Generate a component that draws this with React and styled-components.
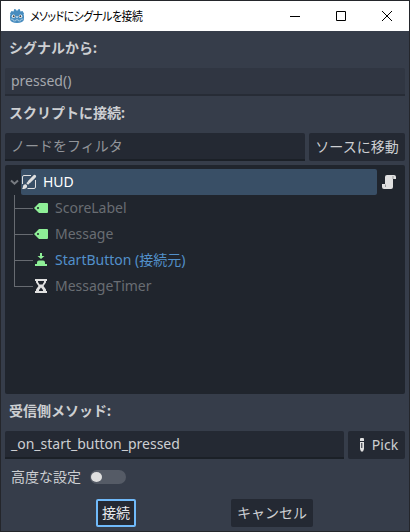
import React from "react";
import styled, { createGlobalStyle } from "styled-components";

const GlobalStyle = createGlobalStyle`
  * { box-sizing: border-box; }
  body { margin: 0; background: #222429; overflow: hidden; }
  svg { display: block; flex: none; }
`;

const Window = styled.div`
  width: 410px;
  height: 532px;
  border: 1px solid #24262b;
  background: #363d4a;
  color: #cdcfd2;
  font: 14px/20px "Noto Sans", "Noto Sans CJK JP", sans-serif;
  white-space: nowrap;
`;

const TitleBar = styled.header`
  display: flex;
  align-items: center;
  height: 30px;
  padding-left: 8px;
  background: #fff;
  color: #000;
`;

const Title = styled.h1`
  flex: 1;
  margin: 0 0 0 5px;
  font: 400 12px/18px "Noto Sans CJK JP", sans-serif;
  font-feature-settings: "palt";
  letter-spacing: -0.55px;
  transform: scaleX(0.905);
  transform-origin: left;
`;

const WindowButton = styled.button`
  display: grid;
  place-items: center;
  width: 46px;
  height: 30px;
  padding: 0;
  border: 0;
  background: none;
`;

const WindowControls = styled.div`
  display: flex;
  margin-right: -1px;
`;

const Body = styled.main`
  display: flex;
  flex-direction: column;
  padding: 0 4px;
`;

const Heading = styled.h2`
  height: 37px;
  margin: 0;
  padding: 7px 0 0 4px;
  font-size: 14px;
  line-height: 20px;
  font-weight: 700;
`;

const FieldRow = styled.div`
  display: flex;
  gap: 4px;
`;

const Field = styled.div`
  flex: 1;
  height: 28px;
  padding: 3px 6px;
  border-radius: 2px 2px 0 0;
  border-bottom: 2px solid ${(p) => (p.$readOnly ? "#272c36" : "#1b2027")};
  background: ${(p) => (p.$readOnly ? "#303642" : "#242933")};
  color: ${(p) => (p.$muted ? "#92959a" : p.$readOnly ? "#a5a8ad" : "#cdcfd2")};
`;

const Button = styled.button`
  display: flex;
  align-items: center;
  justify-content: center;
  gap: ${(p) => p.$gap || 0}px;
  width: ${(p) => p.$width}px;
  height: 28px;
  padding: 0 0 0 ${(p) => p.$inset || 0}px;
  border: ${(p) => (p.$focused ? "2px solid #70bafa" : "0")};
  border-radius: 2px;
  background: #242933;
  color: ${(p) => (p.$focused ? "#e8eaed" : "#cdcfd2")};
  font: inherit;
`;

const Tree = styled.section`
  height: 229px;
  margin-top: 4px;
  padding: 4px;
  border-radius: 2px;
  background: #20252d;
`;

const RootRow = styled.div`
  display: flex;
  align-items: center;
  height: 26px;
`;

const Selection = styled.div`
  display: flex;
  align-items: center;
  gap: 6px;
  width: 356px;
  height: 26px;
  margin: 0 4px 0 2px;
  border-radius: 2px;
  background: #394f66;
  color: #fff;
`;

const Children = styled.div`
  display: flex;
  padding-left: 5px;
`;

const Items = styled.div`
  display: flex;
  flex-direction: column;
`;

const Item = styled.div`
  display: flex;
  align-items: center;
  gap: 6px;
  height: 26px;
  color: ${(p) => (p.$source ? "#5290ca" : "#696d73")};
`;

const Option = styled.label`
  display: flex;
  align-items: center;
  gap: 9px;
  height: 36px;
  padding-left: 6px;
`;

const Toggle = styled.span`
  width: 36px;
  height: 14px;
  padding: 2px 1px;
  border-radius: 7px;
  background: #555b66;
`;

const Knob = styled.span`
  display: block;
  width: 11px;
  height: 10px;
  border-radius: 50%;
  background: #e0e0e0;
`;

const Actions = styled.footer`
  display: flex;
  gap: 95px;
  margin-top: 4px;
  padding-left: 91px;
`;

const GodotIcon = () => (
  <svg width="16" height="16" viewBox="0 0 16 16">
    <path d="M1 5.500 2.500 3l2 .6.800-2.600L7 1.500l.3 1h1.400l.3-1L10.700 1l.8 2.600 2-.6L15 5.500 14.500 7l.5.500v4c-.5 2-3 3.500-7 3.500s-6.500-1.500-7-3.500v-4L1.500 7z" fill="#478cbf" />
    <path d="M1.500 11l2.500.3.4 1.500 2 .2.500-1.200h2.200l.500 1.200 2-.2.400-1.500 2.500-.3" fill="none" stroke="#c4dbea" strokeWidth=".7" />
    <circle cx="4.500" cy="8.300" r="1.700" fill="#fff" />
    <circle cx="11.500" cy="8.300" r="1.700" fill="#fff" />
    <circle cx="4.700" cy="8.300" r="1" fill="#414042" />
    <circle cx="11.300" cy="8.300" r="1" fill="#414042" />
    <path d="M8 8v2" stroke="#fff" />
  </svg>
);

const MinimizeIcon = () => (
  <svg width="10" height="10"><path d="M0 5.500h10" stroke="#000" /></svg>
);
const MaximizeIcon = () => (
  <svg width="10" height="10"><path d="M.5.5h9v9h-9z" fill="none" stroke="#000" /></svg>
);
const CloseIcon = () => (
  <svg width="10" height="10"><path d="M0 0l10 10M10 0L0 10" stroke="#000" /></svg>
);

const ArrowIcon = () => (
  <svg width="10" height="8"><path d="M2 2.500l3.500 3.200L9 2.500" fill="none" stroke="#777b81" strokeWidth="2" /></svg>
);

const CanvasLayerIcon = () => (
  <svg width="16" height="16" fill="none" stroke="#e0e0e0">
    <path d="M10 1.500H3A1.500 1.500 0 0 0 1.500 3v7M14.500 6v7a1.500 1.500 0 0 1-1.500 1.500H6.500" />
    <path d="M13.600 2.400 8.300 7.700" strokeWidth="3" strokeLinecap="round" />
    <path d="M6 8.500 7.700 10.200" strokeWidth="1.800" />
    <path d="M4.600 10.200a2.200 2.200 0 0 1 1.500 2.300c-.2 2-2.300 2.500-5.100 2.500.9-.8.8-1.700 1.100-2.900.3-1.300 1.200-2 2.500-1.900z" fill="#e0e0e0" stroke="none" />
  </svg>
);

const ScriptIcon = () => (
  <svg width="16" height="16" fill="#e0e0e0">
    <path d="M6 1a2 2 0 0 0-2 2v7H1v3a2 2 0 0 0 2 2h7a2 2 0 0 0 2-2V5h3V3a2 2 0 0 0-2-2z" />
    <path d="M12 2v3M4.500 10.500V13" fill="none" stroke="#777b80" strokeWidth=".7" />
  </svg>
);

const LabelIcon = () => (
  <svg width="16" height="16">
    <path fill="#8eef97" fillRule="evenodd" d="M6 3h8a1 1 0 0 1 1 1v8a1 1 0 0 1-1 1H6L1 8zM5 7a1 1 0 1 0 0 2 1 1 0 0 0 0-2z" />
  </svg>
);

const ButtonNodeIcon = () => (
  <svg width="16" height="16" fill="#8eef97">
    <path d="M7 1h2v3h2.500L8 7 4.500 4H7zM6 8.500h4a2 2 0 0 1 2 2V11H4v-.5a2 2 0 0 1 2-2zM2 12h12v2H2zM4 11h8v1H4z" />
  </svg>
);

const TimerIcon = () => (
  <svg width="16" height="16">
    <path fill="#e0e0e0" fillRule="evenodd" d="M2 1h12v2h-1v1.500L10.500 8 13 11.500V13h1v2H2v-2h1v-1.500L5.500 8 3 4.500V3H2zM5 3v1l1.500 2.500h3L11 4V3zM8 9.500 6 12v1h4v-1z" />
  </svg>
);

const PickIcon = () => (
  <svg width="6" height="16" fill="#e0e0e0">
    <path d="M1 2a1 1 0 0 1 1-1h2a1 1 0 0 1 1 1v2H1z" />
    <path fillRule="evenodd" d="M1 5h4v7l-1 2.500H2L1 12zM2.300 6v5h1V6z" />
  </svg>
);

const Branches = () => (
  <svg width="19" height="104" fill="none" stroke="#676b71">
    <path d="M.5 0v91.500M0 13.500h19M0 39.500h19M0 65.500h19M0 91.500h19" />
  </svg>
);

const nodes = [
  { name: "ScoreLabel", icon: LabelIcon },
  { name: "Message", icon: LabelIcon },
  { name: "StartButton (接続元)", icon: ButtonNodeIcon, source: true },
  { name: "MessageTimer", icon: TimerIcon },
];

export default function App() {
  return (
    <>
      <GlobalStyle />
      <Window>
        <TitleBar>
          <GodotIcon />
          <Title>メソッドにシグナルを接続</Title>
          <WindowControls>
            <WindowButton aria-label="最小化"><MinimizeIcon /></WindowButton>
            <WindowButton aria-label="最大化"><MaximizeIcon /></WindowButton>
            <WindowButton aria-label="閉じる"><CloseIcon /></WindowButton>
          </WindowControls>
        </TitleBar>
        <Body>
          <Heading>シグナルから:</Heading>
          <Field $readOnly>pressed()</Field>
          <Heading>スクリプトに接続:</Heading>
          <FieldRow>
            <Field $muted>ノードをフィルタ</Field>
            <Button $width={96}>ソースに移動</Button>
          </FieldRow>
          <Tree>
            <RootRow>
              <ArrowIcon />
              <Selection><CanvasLayerIcon />HUD</Selection>
              <ScriptIcon />
            </RootRow>
            <Children>
              <Branches />
              <Items>
                {nodes.map(({ name, icon: Icon, source }) => (
                  <Item key={name} $source={source}><Icon />{name}</Item>
                ))}
              </Items>
            </Children>
          </Tree>
          <Heading>受信側メソッド:</Heading>
          <FieldRow>
            <Field>_on_start_button_pressed</Field>
            <Button $width={57} $gap={7} $inset={4}><PickIcon />Pick</Button>
          </FieldRow>
          <Option>高度な設定<Toggle><Knob /></Toggle></Option>
          <Actions>
            <Button $width={40} $focused>接続</Button>
            <Button $width={82}>キャンセル</Button>
          </Actions>
        </Body>
      </Window>
    </>
  );
}
